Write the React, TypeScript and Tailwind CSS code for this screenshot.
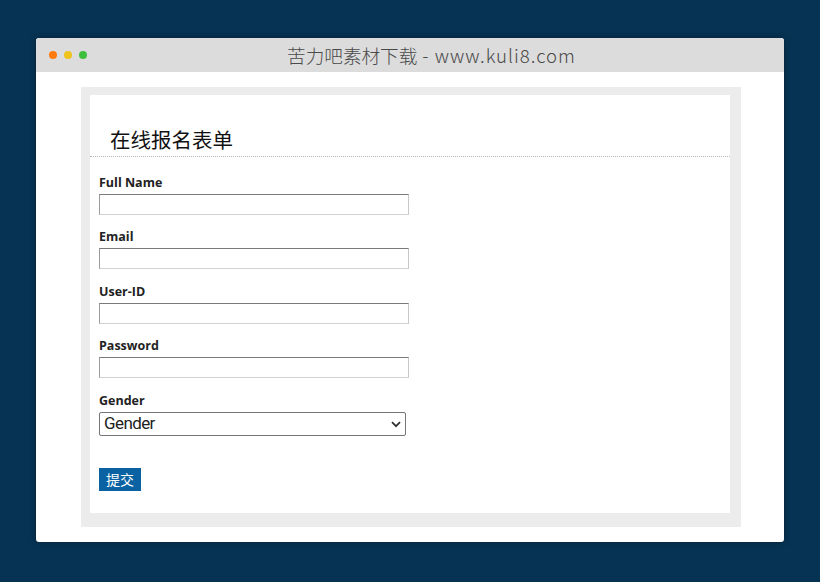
import React from "react";

export default function App() {
  const labelCls =
    "block text-[12.5px] leading-[16px] font-bold text-[#222] mb-[3px] [font-family:'Open_Sans','Noto_Sans',sans-serif]";
  const inputCls =
    "block w-[310px] h-[21px] bg-white border border-t-[#7a7a7a] border-l-[#9a9a9a] border-r-[#c8c8c8] border-b-[#d2d2d2] outline-none";
  const fields = ["Full Name", "Email", "User-ID", "Password"];
  return (
    <div className="w-[820px] h-[582px] bg-[#063353] pt-[38px] pl-[36px]">
      <div className="w-[748px] h-[504px] bg-white rounded-[3px] shadow-[0_0_6px_rgba(0,0,0,0.35)] flex flex-col">
        <div className="h-[34px] bg-[#dcdcdc] rounded-t-[3px] flex items-center pl-[13px] relative">
          <div className="flex gap-[7px]">
            <span className="w-[8px] h-[8px] rounded-full bg-[#ff7b0c]" />
            <span className="w-[8px] h-[8px] rounded-full bg-[#efc21c]" />
            <span className="w-[8px] h-[8px] rounded-full bg-[#3ebf3c]" />
          </div>
          <div className="flex-1 text-center pr-[8px] text-[18.6px] leading-[34px] text-[#4a4a4a] [font-family:'Noto_Sans_CJK_SC',sans-serif] font-light whitespace-nowrap">
            苦力吧素材下载
            <span className="tracking-[1px]"> - www.kuli8.com</span>
          </div>
        </div>
        <div className="pt-[15px] pl-[45px]">
          <div className="w-[660px] h-[440px] bg-[#ececec] pl-[9px] pt-[8px]">
            <div className="w-[640px] h-[418px] bg-white">
              <div className="pt-[32px] pb-[5px] pl-[20px] border-b border-dotted border-[#b8b8b8]">
                <div className="text-[20.5px] leading-[24px] text-[#111] [font-family:'Noto_Sans_CJK_SC',sans-serif]">
                  在线报名表单
                </div>
              </div>
              <form className="pl-[9px] pt-[18px]">
                {fields.map((f) => (
                  <div key={f} className="mb-[14.4px]">
                    <label className={labelCls}>{f}</label>
                    <input
                      type={f === "Password" ? "password" : "text"}
                      className={inputCls}
                    />
                  </div>
                ))}
                <div>
                  <label className={labelCls}>Gender</label>
                  <div className="relative w-[307px] h-[24px] border border-[#767676] rounded-[2px] flex items-center pl-[4px] text-[17px] tracking-[-0.6px] text-[#222] [font-family:Roboto,sans-serif]">
                    Gender
                    <svg
                      className="absolute right-[4px] top-[8px]"
                      width="10"
                      height="7"
                      viewBox="0 0 10 7"
                    >
                      <path
                        d="M1 1.2 L5 5.2 L9 1.2"
                        stroke="#333"
                        strokeWidth="1.8"
                        fill="none"
                      />
                    </svg>
                  </div>
                </div>
                <button
                  type="button"
                  className="mt-[32px] w-[42px] h-[23px] bg-[#0a62a2] text-white text-[14px] leading-[23px] text-center [font-family:'Noto_Sans_CJK_SC',sans-serif]"
                >
                  提交
                </button>
              </form>
            </div>
          </div>
        </div>
      </div>
    </div>
  );
}
